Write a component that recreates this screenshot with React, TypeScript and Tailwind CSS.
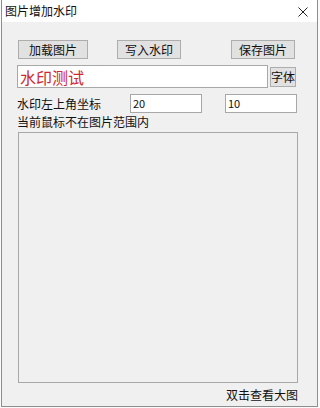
import type React from "react"

const font = { fontFamily: '"Noto Sans CJK SC", "Microsoft YaHei", sans-serif' }

const Btn: React.FC<{ label: string; className?: string }> = ({ label, className }) => (
  <div
    className={`flex items-center justify-center bg-[#e1e1e1] border border-[#adadad] text-[12px] text-[#111] ${className ?? ""}`}
  >
    {label}
  </div>
)

const App: React.FC = () => {
  return (
    <div className="w-[320px] h-[408px] bg-[#fafafa]" style={font}>
      <div className="ml-[1px] w-[317px] h-[407px] border border-t-0 border-[#8e8e8e] bg-[#f0f0f0] flex flex-col">
        {/* title bar */}
        <div className="h-[22px] bg-white flex items-center justify-between pl-[3px] pr-[9px] shrink-0">
          <span className="text-[12px] text-[#111] leading-none">图片增加水印</span>
          <svg width="10" height="10" viewBox="0 0 10 10" className="mt-[1px]">
            <path d="M0.5 0.5 L9.5 9.5 M9.5 0.5 L0.5 9.5" stroke="#222" strokeWidth="1" fill="none" />
          </svg>
        </div>

        {/* body */}
        <div className="flex-1 flex flex-col pl-[15px] pt-[18px]">
          <div className="flex h-[19px]">
            <Btn label="加载图片" className="ml-[1px] w-[70px]" />
            <Btn label="写入水印" className="ml-[29px] w-[64px]" />
            <Btn label="保存图片" className="ml-[50px] w-[64px]" />
          </div>

          <div className="flex items-center mt-[6px] h-[23px]">
            <div className="w-[251px] h-[23px] bg-white border border-[#a8a8a8] flex items-center pl-[2px] text-[16px] text-[#cc2a31]">
              水印测试
            </div>
            <Btn label="字体" className="ml-[2px] w-[26px] h-[20px]" />
          </div>

          <div className="flex items-center mt-[6px] h-[19px]">
            <span className="w-[113px] text-[12px] text-[#111]">水印左上角坐标</span>
            <div className="w-[72px] h-[19px] bg-white border border-[#a8a8a8] flex items-center pl-[2px] text-[11px] text-[#111]">
              20
            </div>
            <div className="ml-[23px] w-[72px] h-[19px] bg-white border border-[#a8a8a8] flex items-center pl-[2px] text-[11px] text-[#111]">
              10
            </div>
          </div>

          <div className="h-[16px] mt-[1px] flex items-center text-[12px] text-[#111]">当前鼠标不在图片范围内</div>

          <div className="ml-[1px] mt-[2px] w-[280px] h-[251px] border border-[#a8a8a8] bg-[#f0f0f0]" />

          <div className="w-[281px] mt-[5px] text-right text-[12px] text-[#111] leading-[14px]">双击查看大图</div>
        </div>
      </div>
    </div>
  )
}

export default App
